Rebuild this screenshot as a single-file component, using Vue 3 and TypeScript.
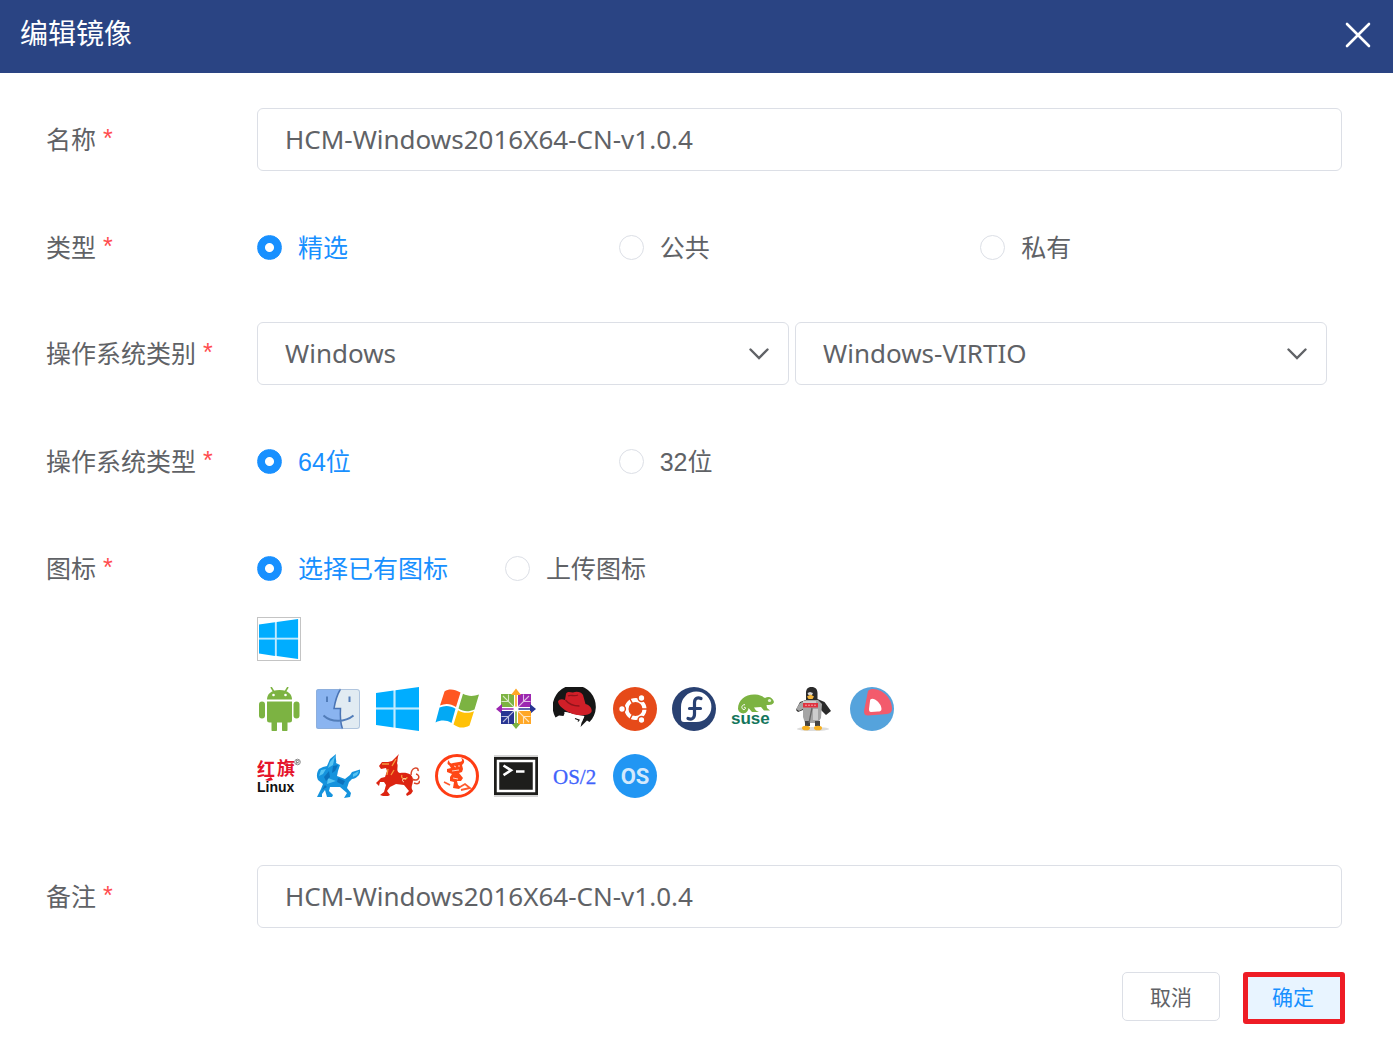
<script setup lang="ts">
import { ref, computed } from 'vue'

interface OsIcon {
  name: string
  art: string
}

const imageName = ref('HCM-Windows2016X64-CN-v1.0.4')
const remark = ref('HCM-Windows2016X64-CN-v1.0.4')
const imageType = ref('精选')
const osFamily = ref('Windows')
const osVariant = ref('Windows-VIRTIO')
const osBits = ref('64位')
const iconSource = ref('选择已有图标')
const selectedIcon = ref('windows')

const typeOptions = ['精选', '公共', '私有']
const bitOptions = ['64位', '32位']
const sourceOptions = ['选择已有图标', '上传图标']

const icons: OsIcon[] = [
  {
    name: 'android',
    art: `<g fill="#7cb342"><path d="M10 12.500C10 7.500 13.500 3 22.500 3S35 7.500 35 12.500Z"/><path d="M14 0l3 5M31 0l-3 5" stroke="#7cb342" stroke-width="1.600"/><path d="M10 14.500h25V33a2.500 2.500 0 0 1-2.500 2.500h-20A2.500 2.500 0 0 1 10 33Z"/><rect x="2" y="14.500" width="6" height="17" rx="3"/><rect x="36.500" y="14.500" width="6" height="17" rx="3"/><path d="M14.500 34h5.500v8.500a2.700 2.700 0 0 1-5.500 0ZM25 34h5.500v8.500a2.700 2.700 0 0 1-5.500 0Z"/></g><circle cx="16.500" cy="8" r="1.300" fill="#fff"/><circle cx="28.500" cy="8" r="1.300" fill="#fff"/>`,
  },
  {
    name: 'finder',
    art: `<rect y="2" width="44" height="40" rx="2.500" fill="#e1ebf2"/><path d="M2.500 2H24.500C21 8 19 15 18 21.500H24.500C24 29 24.500 36 26.500 42H2.500A2.500 2.500 0 0 1 0 39.500V4.500A2.500 2.500 0 0 1 2.500 2Z" fill="#8ab4f0"/><path d="M24.500 2C21 8 19 15 18 21.500H24.500C24 29 24.500 36 26.500 42" fill="none" stroke="#4a74b4" stroke-width="1.500"/><path d="M7.500 28.500C15 35.500 29 35.500 37.500 28.500M11 9.500v5.500M33.500 9.500v5.500" fill="none" stroke="#527db9" stroke-width="2"/><rect x=".5" y="2.500" width="43" height="39" rx="2.500" fill="none" stroke="#8fabd0" stroke-opacity=".6"/>`,
  },
  {
    name: 'windows',
    art: `<path fill="#bfeaff" d="M0 20.500h43v2H0ZM17.500 3.500h2v37h-2Z"/><path fill="#00adff" d="M0 6l17.500-2.400v17H0ZM19.500 3.300L43 0v20.600H19.500ZM0 22.600h17.500v18L0 38ZM19.500 22.600H43V44l-23.500-3.300Z"/>`,
  },
  {
    name: 'windows-xp',
    art: `<path fill="#ff5722" d="M9.500 4.500C14 1.500 19 2 25.500 5.500L21 20C15.500 16.500 10.500 16 5 18.500Z"/><path fill="#7cb342" d="M28 6.800C33 9.500 38.500 9.500 44 7.500L39.500 22.500C34 25 28.500 25 23.500 21.500Z"/><path fill="#03a9f4" d="M4.500 20.500C10 18 15.500 18.500 20.500 21.800L16.500 36C11 32.800 6 33 .5 35.500Z"/><path fill="#ffc107" d="M23 23.300C28.500 26.500 33 26.500 39 24.300L34.500 38.500C29 41.300 24 41.500 18.500 37.500Z"/>`,
  },
  {
    name: 'centos',
    art: `<path fill="#7cb342" d="M7 7h13v13H7ZM21.200 23h1.600v13h4.200L22 42l-5-6h4.200Z"/><path fill="#9c27b0" d="M24 7h13v13H24ZM21 21.200H8V17l-6 5 6 5v-4.200h13Z"/><path fill="#283593" d="M7 24h13v13H7ZM23 21.200h13V17l6 5-6 5v-4.200H23Z"/><path fill="#ffa726" d="M24 24h13v13H24ZM21.200 21V8H17l5-6.500L27 8h-4.200v13Z"/><path d="M9 9l26 26M35 9L9 35M14.500 7.500v7h-7M29.500 7.500v7h7M14.500 36.500v-7h-7M29.500 36.500v-7h7" stroke="#fff" stroke-width="1.100" stroke-opacity=".7" fill="none"/><circle cx="22" cy="22" r="2.500" fill="#fff"/>`,
  },
  {
    name: 'redhat',
    art: `<path fill="#161616" d="M2.500 30.500A21.600 21.600 0 1 1 36.500 35L34 33.500 31.500 36 27.500 40 29 34 31.500 29 20 27 12 25 10.500 29 6 28.500Z"/><path fill="#fff" d="M11 25l4 0.500 16 4.500-2 5-4 1-5-2-5-4Z"/><path d="M22 31.500l4 1.500-1 1.500" stroke="#161616" stroke-width="1.300" fill="none"/><path fill="#d01f28" d="M5 14.500C6 12 9 11.500 12 13L13 7C14 4 17 5 20 5.500 24 4 28 5 30 8L32.500 17C37 18 39.500 22 38.500 25 36 29 27 29 20 27 12 24 5.500 19 5 14.500Z"/><path d="M12.500 13c3 4 8 6 14 6M15 9c3-2 6 1 10-1" stroke="#8d141b" stroke-width="1.300" fill="none"/>`,
  },
  {
    name: 'ubuntu',
    art: `<circle cx="22" cy="22" r="22" fill="#e64a19"/><circle cx="22.500" cy="22" r="9" fill="none" stroke="#fff" stroke-width="4"/><path d="M22.500 22L17 12M22.500 22L17 32M22.500 22h12" stroke="#e64a19" stroke-width="1.500"/><g fill="#fff" stroke="#e64a19" stroke-width="1.500"><circle cx="9" cy="22" r="3.400"/><circle cx="28.500" cy="11" r="3.400"/><circle cx="28.500" cy="33" r="3.400"/></g>`,
  },
  {
    name: 'fedora',
    art: `<circle cx="22" cy="22" r="22" fill="#294172"/><path fill="#fff" d="M12 35A3 3 0 0 1 9 32V20A15.200 15.200 0 1 1 24 35Z"/><path d="M29 11.500C25.500 10 22.500 11.500 22.500 15.500V27C22.500 31.500 19.500 33 16 31.500M17.500 21.500H28.500" fill="none" stroke="#294172" stroke-width="3.200" stroke-linecap="round"/>`,
  },
  {
    name: 'suse',
    art: `<path fill="#7cb342" d="M7 22C7 13 14 7.500 23 7.500 28 7 31 9 34 11 38 8.500 42 11 43 15 42 18 39 18 35.500 18L36 21 39 23.500H33L30 20 23 20.500 25 23.500 28 25H21L17.500 21C17 28 8 28 7 22Z"/><path d="M13 20.500c2-1 2 2 0 2-3 0-3-5 1-4.800" stroke="#fff" stroke-width="1" fill="none"/><circle cx="38.500" cy="13.500" r="1.600" fill="#e8f4da"/><text x="0" y="37" font-family="Liberation Sans, sans-serif" font-weight="bold" font-size="17" fill="#14765c">suse</text>`,
  },
  {
    name: 'linux-penguin',
    art: `<ellipse cx="22" cy="42" rx="16" ry="2" fill="#dcdcdc"/><path fill="#2b2b2b" d="M15 13V6C15 1.500 17.500 0 20.500 0s6 1.500 6 6v6l7 3 6.500 9-5 4-5-5H12l-5 2-2-2 4-8Z"/><path fill="#a5a5a5" d="M5 22l4-6 6-3h12l4 4-1 14-3 5H14l-2-6V22l-4 2Z"/><path fill="#cdcdcd" d="M12 14h13v2H12ZM22 22h5v11h-5Z"/><path fill="#444" d="M14 34h5v5h-5ZM24 34h5v5h-5Z"/><path d="M21 21l-3 15" stroke="#666" stroke-width="1.300"/><rect x="12" y="16" width="15" height="4.500" fill="#e0313e"/><path d="M14 18.200h11" stroke="#f3a6ab" stroke-width="1" stroke-dasharray="2 1"/><path fill="#d9d9d9" d="M16.500 6l2.500-1 3 1-1 2h-3.500Z"/><path fill="#f6b73c" d="M16 9.500l3.500-2 3.500 2-1.500 2.500h-4Z"/><ellipse cx="15" cy="41" rx="4" ry="2.300" fill="#f6b021"/><ellipse cx="27" cy="41" rx="4" ry="2.300" fill="#f6b021"/>`,
  },
  {
    name: 'deepin',
    art: `<circle cx="22" cy="22" r="22" fill="#55a3dc"/><path fill="#f35b6c" d="M18 4C21 1 26 2 31 4 38 8 42 15 42 22 42 25 40 26.500 37 27L18 28.500C15 28.500 14 27 14 24Z"/><path fill="#fff" d="M20 14C20 11.500 22.500 11 25 12.500 29 15 31.500 18.500 31.500 22 31.500 24 30 24.500 28 24.500L21 25C19.500 25 19 24 19 22Z"/>`,
  },
  {
    name: 'redflag',
    art: `<g font-family="Noto Sans CJK SC, sans-serif" font-weight="bold" fill="#e5142b"><text x="0" y="22" font-size="18">红</text><text x="20" y="21" font-size="18">旗</text></g><text x="0" y="38" font-family="Liberation Sans, sans-serif" font-weight="bold" font-size="14" fill="#111">Linux</text><path fill="#e5142b" d="M8 26l6-3 2 3-4 1Z"/><circle cx="40.500" cy="8" r="2.800" fill="none" stroke="#8b8b8b"/><path d="M39.500 9.800V6.500h1.500a1 1 0 0 1 0 2h-1l1.500 1.300" fill="none" stroke="#777" stroke-width=".8"/>`,
  },
  {
    name: 'kylin-blue',
    art: `<path fill="#1593dd" d="M20 0C19 4 21 7 20 9L24 11 22 17 21 22 29 25 34 21 36 18 44 15.500C45 19 42 24 36 25L33 28 31 34 35 39 34 43 28 44 31 39 24 33 14 33 13 37 17 41 16 43 11 43 9 36 6 40 6 43 1 43 5 35 7 30 2 26C0 22 1 18 3 15L7 13 11 12 14 5Z"/><path fill="#56c4f3" d="M19 2L14 8 12 14 17 11ZM5 16l-2 6 4-2 3-5ZM37 20l6-3-2 4-4 2ZM12 24l8 3-9 3Z"/><path fill="#0b72bd" d="M8 23l5-6 1 6-4 4ZM17 12l5-1-3 6-3 2ZM22 24l7 3-2 4-6-3ZM9 31l-3 5 5-3Z"/>`,
  },
  {
    name: 'kylin-red',
    art: `<path d="M23 0C21 4 22 7 21 9 23 13 19 17 24 19 31 18 37 20 37 26 37 31 34 33 37 37L35 40 31 42 30 40 33 37 28 31 20 30 14 33 11 37 14 41 12 42 7 42 4 41 8 38 10 31 8 28 4 28 3 32 0 29 5 24 9 23 11 17 10 14 5 15 3 12 6 8 12 8 16 7Z" fill="#dc2411"/><path d="M36 25C43 29 45 21 40 20M35 21C35 13 43 12 42 17M38 29c5 2 6-1 5-2" stroke="#d9462a" stroke-width="1.500" fill="none"/><path d="M6 10l7 0M20 5l-4 7M12 15l-1 6M26 21c-2 4 5 6 5 2M18 16l-3 5" stroke="#f59a3c" stroke-width="1.300" fill="none"/><path d="M30 25c-3-2-5 2-2 3" stroke="#ffe3c0" stroke-width="1" fill="none"/>`,
  },
  {
    name: 'bsd',
    art: `<circle cx="22" cy="22" r="20.500" fill="#fff" stroke="#ff3d14" stroke-width="3"/><path fill="#ff4716" d="M14 6C14 9 16 10 18 9L24 8C27 8 28 6 26 4 30 5 30 9 27 11L28 15 27 18 24 19 28 24 26 27 22 27 23 31 26 33 24 35 18 34 19 28 15 27 15 23 17 20 12 18 12 15 16 14 14 11C12 10 12 8 14 6Z"/><path d="M19 12l2 1M24 11v2M17 17l7-1M18 24l5 1" stroke="#ffd1c4" stroke-width="1" fill="none"/><path d="M9 28l6 3M25 33l5-3 5 4-9 2" stroke="#ff5a2e" stroke-width="1.800" fill="none"/>`,
  },
  {
    name: 'terminal',
    art: `<path d="M0 2h44M0 42h44" stroke="#aaa"/><rect y="3" width="44" height="38" fill="#1e1e1c"/><rect x="4" y="7" width="36" height="30" fill="#1e1e1c" stroke="#fff" stroke-width="2.500"/><path d="M9.500 11.500l7.500 4.800-7.500 4.800M22 17.500h8.500" fill="none" stroke="#fff" stroke-width="2.600"/>`,
  },
  {
    name: 'os2',
    art: `<text x="0" y="30" font-family="Liberation Serif, serif" font-size="21" fill="#3f63fb" stroke="#3f63fb" stroke-width=".3">OS/2</text>`,
  },
  {
    name: 'generic',
    art: `<circle cx="22" cy="22" r="22" fill="#2196f3"/><text x="22" y="30" text-anchor="middle" font-family="Roboto, sans-serif" font-weight="bold" font-size="22" fill="#d3e9fc">OS</text>`,
  },
]

const previewArt = computed(() => icons.find((icon) => icon.name === selectedIcon.value)?.art ?? '')
</script>

<template>
  <form class="dialog" @submit.prevent>
    <header class="dialog-header">
      <h1 class="dialog-title">编辑镜像</h1>
      <button type="button" class="close-button" aria-label="关闭">
        <svg width="26" height="26" viewBox="0 0 26 26" aria-hidden="true">
          <path d="M2 2l22 22M24 2L2 24" stroke="#fff" stroke-width="2.600" stroke-linecap="round" />
        </svg>
      </button>
    </header>

    <main class="dialog-body">
      <div class="form-row">
        <label class="form-label" for="image-name">名称 <span class="required">*</span></label>
        <input id="image-name" v-model="imageName" class="text-box" type="text" />
      </div>

      <div class="form-row radio-row" role="radiogroup" aria-labelledby="type-label">
        <span id="type-label" class="form-label">类型 <span class="required">*</span></span>
        <div class="radio-grid">
          <label v-for="option in typeOptions" :key="option" class="radio">
            <input v-model="imageType" type="radio" name="image-type" :value="option" />
            <span>{{ option }}</span>
          </label>
        </div>
      </div>

      <div class="form-row">
        <label class="form-label" for="os-family">操作系统类别 <span class="required">*</span></label>
        <div class="select-group">
          <div class="select-wrap">
            <select id="os-family" v-model="osFamily" class="select-box">
              <option>Windows</option>
            </select>
            <svg class="chevron" viewBox="0 0 20 12" aria-hidden="true"><path d="M1.500 1.500L10 10l8.500-8.500" /></svg>
          </div>
          <div class="select-wrap">
            <select v-model="osVariant" class="select-box" aria-label="操作系统版本">
              <option>Windows-VIRTIO</option>
            </select>
            <svg class="chevron" viewBox="0 0 20 12" aria-hidden="true"><path d="M1.500 1.500L10 10l8.500-8.500" /></svg>
          </div>
        </div>
      </div>

      <div class="form-row radio-row" role="radiogroup" aria-labelledby="bits-label">
        <span id="bits-label" class="form-label">操作系统类型 <span class="required">*</span></span>
        <div class="radio-grid">
          <label v-for="option in bitOptions" :key="option" class="radio">
            <input v-model="osBits" type="radio" name="os-bits" :value="option" />
            <span>{{ option }}</span>
          </label>
        </div>
      </div>

      <div class="icon-section">
        <div class="form-row radio-row" role="radiogroup" aria-labelledby="icon-label">
          <span id="icon-label" class="form-label">图标 <span class="required">*</span></span>
          <div class="radio-inline">
            <label v-for="option in sourceOptions" :key="option" class="radio">
              <input v-model="iconSource" type="radio" name="icon-source" :value="option" />
              <span>{{ option }}</span>
            </label>
          </div>
        </div>
        <div class="icon-picker">
          <div class="icon-preview">
            <svg viewBox="0 0 44 44" aria-hidden="true" v-html="previewArt"></svg>
          </div>
          <div class="icon-grid">
            <button
              v-for="icon in icons"
              :key="icon.name"
              type="button"
              class="icon-button"
              :aria-label="icon.name"
              @click="selectedIcon = icon.name"
            >
              <svg viewBox="0 0 44 44" aria-hidden="true" v-html="icon.art"></svg>
            </button>
          </div>
        </div>
      </div>

      <div class="form-row">
        <label class="form-label" for="remark">备注 <span class="required">*</span></label>
        <input id="remark" v-model="remark" class="text-box" type="text" />
      </div>
    </main>

    <footer class="dialog-footer">
      <button type="button" class="button">取消</button>
      <button type="submit" class="button button-confirm">确定</button>
    </footer>
  </form>
</template>

<style>
body {
  margin: 0;
  background: #fff;
}
</style>

<style scoped>
.dialog {
  color: #606266;
  font-family: 'Liberation Sans', 'Noto Sans CJK SC', sans-serif;
  font-size: 25px;
  line-height: 36px;
}

.dialog-header {
  display: flex;
  align-items: center;
  justify-content: space-between;
  box-sizing: border-box;
  height: 73px;
  padding: 0 22px 4px 20px;
  background: #2a4483;
  color: #fff;
}

.dialog-title {
  margin: 0;
  font-size: 28px;
  font-weight: 400;
}

.close-button {
  display: flex;
  padding: 0;
  border: 0;
  background: none;
  cursor: pointer;
}

.dialog-body {
  display: flex;
  flex-direction: column;
  gap: 44px;
  padding: 35px 51px 0 46px;
}

.form-row {
  display: grid;
  grid-template-columns: 211px 1fr;
  align-items: center;
  box-sizing: border-box;
  min-height: 63px;
}

.radio-row {
  padding-top: 2px;
}

.form-label {
  white-space: nowrap;
}

.required {
  color: #ff4d4f;
  line-height: 1;
  vertical-align: 2px;
}

.text-box,
.select-box {
  box-sizing: border-box;
  width: 100%;
  height: 63px;
  padding: 0 27px 2px;
  border: 1px solid #dcdfe6;
  border-radius: 6px;
  background: #fff;
  color: #606266;
  font-family: 'Noto Sans', 'Noto Sans CJK SC', sans-serif;
  font-size: 26px;
}

.radio-grid {
  display: grid;
  grid-template-columns: repeat(3, 1fr);
}

.radio-inline {
  display: flex;
  gap: 57px;
}

.radio {
  display: flex;
  align-items: center;
  gap: 16px;
  cursor: pointer;
}

.radio input {
  appearance: none;
  box-sizing: border-box;
  width: 25px;
  height: 25px;
  margin: 0;
  border: 1px solid #dcdfe6;
  border-radius: 50%;
  background: #fff;
}

.radio input:checked {
  border-color: #1890ff;
  background: radial-gradient(circle, #fff 4px, #1890ff 5px);
}

.radio input:checked + span {
  color: #1890ff;
}

.select-group {
  display: flex;
  gap: 6px;
  padding-right: 15px;
}

.select-wrap {
  position: relative;
  flex: 1;
}

.select-box {
  display: block;
  appearance: none;
}

.chevron {
  position: absolute;
  top: 26px;
  right: 20px;
  width: 20px;
  height: 12px;
  fill: none;
  stroke: #606266;
  stroke-width: 2.4px;
  stroke-linecap: round;
  pointer-events: none;
}

.icon-picker {
  display: flex;
  flex-direction: column;
  gap: 26px;
  margin: 18px 0 23px 211px;
}

.icon-preview {
  box-sizing: border-box;
  width: 44px;
  height: 44px;
  padding: 1px;
  border: 1px solid #c4c4c4;
}

.icon-preview svg,
.icon-button svg {
  display: block;
  width: 100%;
  height: 100%;
}

.icon-grid {
  display: grid;
  grid-template-columns: repeat(11, 44px);
  justify-content: space-between;
  row-gap: 23px;
  max-width: 637px;
}

.icon-button {
  width: 44px;
  height: 44px;
  padding: 0;
  border: 0;
  background: none;
  cursor: pointer;
}

.dialog-footer {
  display: flex;
  justify-content: flex-end;
  align-items: flex-start;
  gap: 23px;
  padding: 44px 48px 31px;
}

.button {
  box-sizing: border-box;
  width: 98px;
  height: 49px;
  padding: 0 0 2px;
  border: 1px solid #dcdfe6;
  border-radius: 5px;
  background: #fff;
  color: #606266;
  font-family: inherit;
  font-size: 21px;
  cursor: pointer;
}

.button-confirm {
  width: 102px;
  height: 52px;
  padding: 0 2px 4px 0;
  border: 5px solid #ee1c25;
  border-radius: 3px;
  background: #e8f4ff;
  color: #1890ff;
}
</style>
